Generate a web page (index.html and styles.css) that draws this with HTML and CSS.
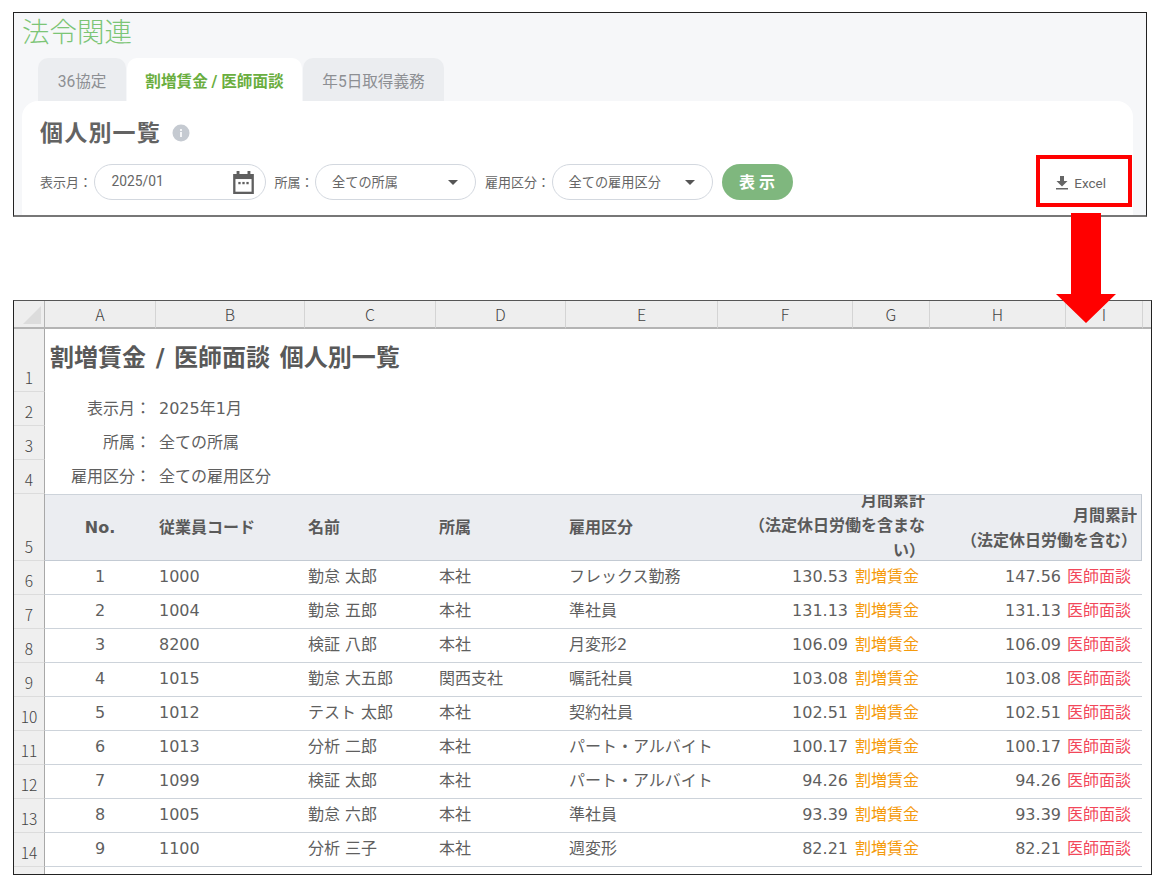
FILE: index.html
```html
<!DOCTYPE html>
<html lang="ja">
<head>
  <meta charset="UTF-8">
  <title>法令関連</title>
  <link rel="stylesheet" href="styles.css">
</head>
<body>
<div class="page">

  <div class="panel">
    <h1 class="app-title">法令関連</h1>
    <div class="tabs">
      <div class="tab">36協定</div>
      <div class="tab active">割増賃金 / 医師面談</div>
      <div class="tab">年5日取得義務</div>
    </div>
    <div class="card">
      <div class="card-head">
        <h2>個人別一覧</h2>
        <svg class="info" viewBox="0 0 18 18"><circle cx="9" cy="9" r="8.5" fill="#c5cad1"/><rect x="8" y="8" width="2" height="5" fill="#f4f5f7"/><rect x="8" y="5" width="2" height="2" fill="#f4f5f7"/></svg>
      </div>
      <div class="filters">
        <label>表示月：</label>
        <div class="field date">
          <span>2025/01</span>
          <svg class="cal" viewBox="2 1 18 20"><path d="M2 3.500h3V1h2.500v2.500h7V1H17v2.500h3V21H2z" fill="#5f5f5f"/><rect x="4" y="8" width="14" height="11" fill="#fff"/><rect x="6.500" y="10.500" width="2" height="2" fill="#5f5f5f"/><rect x="10" y="10.500" width="2" height="2" fill="#5f5f5f"/><rect x="13.500" y="10.500" width="2" height="2" fill="#5f5f5f"/></svg>
        </div>
        <label>所属：</label>
        <div class="field select">
          <span>全ての所属</span><i class="caret"></i>
        </div>
        <label>雇用区分：</label>
        <div class="field select">
          <span>全ての雇用区分</span><i class="caret"></i>
        </div>
        <button class="show-btn">表 示</button>
        <div class="excel-btn">
          <svg viewBox="0 0 12 14"><path d="M4 0h4v5h3.500L6 10.500.5 5H4z" fill="#666"/><rect x="0" y="12" width="12" height="1.500" fill="#666"/></svg>
          <span>Excel</span>
        </div>
      </div>
    </div>
  </div>

  <div class="sheet">
    <table class="grid">
      <colgroup>
        <col class="c-rh"><col class="c-a"><col class="c-b"><col class="c-c"><col class="c-d"><col class="c-e"><col class="c-f"><col class="c-g"><col class="c-h"><col class="c-i"><col class="c-end">
      </colgroup>
      <tr class="col-heads">
        <th class="corner"><i></i></th>
        <th>A</th><th>B</th><th>C</th><th>D</th><th>E</th><th>F</th><th>G</th><th>H</th><th>I</th><th></th>
      </tr>
      <tr class="r-title">
        <td class="rh">1</td>
        <td colspan="10" class="title">割増賃金 / 医師面談 個人別一覧</td>
      </tr>
      <tr class="r-info">
        <td class="rh">2</td>
        <td class="info-k">表示月：</td>
        <td colspan="9" class="info-v">2025年1月</td>
      </tr>
      <tr class="r-info">
        <td class="rh">3</td>
        <td class="info-k">所属：</td>
        <td colspan="9" class="info-v">全ての所属</td>
      </tr>
      <tr class="r-info">
        <td class="rh">4</td>
        <td class="info-k">雇用区分：</td>
        <td colspan="9" class="info-v">全ての雇用区分</td>
      </tr>
      <tr class="r-head">
        <td class="rh">5</td>
        <th class="ctr">No.</th>
        <th>従業員コード</th>
        <th>名前</th>
        <th>所属</th>
        <th>雇用区分</th>
        <th colspan="2" class="num"><div class="clip clip-3">月間累計<br>（法定休日労働を含まな<br>い）</div></th>
        <th colspan="2" class="num"><div class="clip">月間累計<br>（法定休日労働を含む）</div></th>
        <td class="blank"></td>
      </tr>
      <tr class="r-data"><td class="rh">6</td><td class="ctr">1</td><td>1000</td><td>勤怠 太郎</td><td>本社</td><td>フレックス勤務</td><td class="num">130.53</td><td class="wage">割増賃金</td><td class="num">147.56</td><td class="doc">医師面談</td><td class="blank"></td></tr>
      <tr class="r-data"><td class="rh">7</td><td class="ctr">2</td><td>1004</td><td>勤怠 五郎</td><td>本社</td><td>準社員</td><td class="num">131.13</td><td class="wage">割増賃金</td><td class="num">131.13</td><td class="doc">医師面談</td><td class="blank"></td></tr>
      <tr class="r-data"><td class="rh">8</td><td class="ctr">3</td><td>8200</td><td>検証 八郎</td><td>本社</td><td>月変形2</td><td class="num">106.09</td><td class="wage">割増賃金</td><td class="num">106.09</td><td class="doc">医師面談</td><td class="blank"></td></tr>
      <tr class="r-data"><td class="rh">9</td><td class="ctr">4</td><td>1015</td><td>勤怠 大五郎</td><td>関西支社</td><td>嘱託社員</td><td class="num">103.08</td><td class="wage">割増賃金</td><td class="num">103.08</td><td class="doc">医師面談</td><td class="blank"></td></tr>
      <tr class="r-data"><td class="rh">10</td><td class="ctr">5</td><td>1012</td><td>テスト 太郎</td><td>本社</td><td>契約社員</td><td class="num">102.51</td><td class="wage">割増賃金</td><td class="num">102.51</td><td class="doc">医師面談</td><td class="blank"></td></tr>
      <tr class="r-data"><td class="rh">11</td><td class="ctr">6</td><td>1013</td><td>分析 二郎</td><td>本社</td><td>パート・アルバイト</td><td class="num">100.17</td><td class="wage">割増賃金</td><td class="num">100.17</td><td class="doc">医師面談</td><td class="blank"></td></tr>
      <tr class="r-data"><td class="rh">12</td><td class="ctr">7</td><td>1099</td><td>検証 太郎</td><td>本社</td><td>パート・アルバイト</td><td class="num">94.26</td><td class="wage">割増賃金</td><td class="num">94.26</td><td class="doc">医師面談</td><td class="blank"></td></tr>
      <tr class="r-data"><td class="rh">13</td><td class="ctr">8</td><td>1005</td><td>勤怠 六郎</td><td>本社</td><td>準社員</td><td class="num">93.39</td><td class="wage">割増賃金</td><td class="num">93.39</td><td class="doc">医師面談</td><td class="blank"></td></tr>
      <tr class="r-data"><td class="rh">14</td><td class="ctr">9</td><td>1100</td><td>分析 三子</td><td>本社</td><td>週変形</td><td class="num">82.21</td><td class="wage">割増賃金</td><td class="num">82.21</td><td class="doc">医師面談</td><td class="blank"></td></tr>
    </table>
    <div class="sheet-rest"><i></i></div>
  </div>

  <!-- annotations over the screenshots -->
  <div class="mark-box"></div>
  <svg class="mark-arrow" viewBox="0 0 60 112"><path d="M15 0h30v81h15L30 110 0 81h15z" fill="#ff0000"/></svg>
</div>
</body>
</html>
```

FILE: styles.css
```css
html,
body {
  margin: 0;
  padding: 0;
  background: #fff;
}

.page {
  position: relative;
  width: 1169px;
  height: 887px;
  overflow: hidden;
  padding-top: 12px;
  box-sizing: border-box;
  font-family: Roboto, "Noto Sans CJK JP", sans-serif;
}

/* upper screenshot */
.panel {
  margin-left: 13px;
  width: 1134px;
  height: 205px;
  box-sizing: border-box;
  border: 1px solid #222;
  border-bottom: 2px solid #777;
  background: #f6f7f9;
  overflow: hidden;
  padding-left: 8px;
}

.app-title {
  margin: 0;
  height: 45px;
  font-size: 27.500px;
  line-height: 40px;
  font-weight: 300;
  color: #7cc576;
}

.tabs {
  display: flex;
  gap: 1px;
  margin-left: 16px;
  height: 43px;
}

.tab {
  display: flex;
  align-items: center;
  justify-content: center;
  padding: 0 18px;
  background: #ebedf0;
  border-radius: 10px 10px 0 0;
  font-size: 15.600px;
  font-weight: 400;
  color: #8d8f93;
}

.tab:first-child {
  width: 88px;
  padding: 0;
}

.tab.active {
  width: 175px;
  padding: 0;
  background: #fff;
  color: #6aae3f;
  font-weight: 700;
}

.tab:last-child {
  width: 141px;
  padding: 0;
}

.card {
  width: 1111px;
  height: 130px;
  box-sizing: border-box;
  background: #fff;
  border-radius: 16px 16px 0 0;
  padding: 0 18px;
}

.card-head {
  display: flex;
  align-items: center;
  gap: 11px;
  height: 63px;
}

.card-head h2 {
  margin: -4px 0 0;
  font-size: 23px;
  letter-spacing: 1.200px;
  font-weight: 700;
  color: #636363;
}

.info {
  width: 18px;
  height: 18px;
}

.filters {
  display: flex;
  align-items: center;
  height: 36px;
}

.filters label {
  font-size: 13px;
  color: #666;
  margin: -2px 1.500px 0 0;
  white-space: nowrap;
}

.field {
  display: flex;
  align-items: center;
  justify-content: space-between;
  height: 36px;
  box-sizing: border-box;
  border: 1px solid #d3d8df;
  border-radius: 18px;
  padding: 0 11px 0 17px;
  font-size: 13.200px;
  color: #666;
  margin-right: 9px;
}

.field span {
  margin-top: -2px;
}

.field.date {
  width: 172px;
  font-size: 13.800px;
}

.field.select {
  width: 161px;
  padding: 0 17px 0 16px;
}

.cal {
  width: 21px;
  height: 23px;
}

.caret {
  width: 0;
  height: 0;
  border-left: 5px solid transparent;
  border-right: 5px solid transparent;
  border-top: 5px solid #555;
}

.show-btn {
  width: 71px;
  height: 36px;
  border: 0;
  border-radius: 18px;
  background: #7fb77e;
  color: #fff;
  font-family: inherit;
  font-size: 16px;
  font-weight: 700;
  padding: 0 0 3px;
}

.excel-btn {
  display: flex;
  align-items: center;
  gap: 6px;
  margin-left: auto;
  margin-right: 9px;
  font-size: 13.500px;
  color: #666;
  padding-top: 1px;
}

.excel-btn svg {
  width: 12px;
  height: 14px;
}

/* lower screenshot, excel sheet */
.sheet {
  margin: 83px 0 0 13px;
  width: 1139px;
  height: 575px;
  box-sizing: border-box;
  border: 1px solid #222;
  border-top-color: #555;
  overflow: hidden;
  background: #fff;
}

.grid {
  border-collapse: separate;
  border-spacing: 0;
  table-layout: fixed;
  width: 1137px;
  font-family: "DejaVu Sans", "Noto Sans CJK JP", sans-serif;
  font-size: 16px;
  line-height: 22px;
  color: #5f5f5f;
}

.c-rh { width: 31px; }
.c-a { width: 110px; }
.c-b { width: 149px; }
.c-c { width: 131px; }
.c-d { width: 130px; }
.c-e { width: 152px; }
.c-f { width: 135px; }
.c-g { width: 77px; }
.c-h { width: 136px; }
.c-i { width: 77px; }
.c-end { width: 9px; }

.grid td,
.grid th {
  padding: 0 4px;
  box-sizing: border-box;
  white-space: nowrap;
  overflow: hidden;
}

.col-heads th {
  height: 28px;
  background: #eeeeee;
  border-left: 1px solid #d4d4d4;
  border-bottom: 2px solid #b4b4b4;
  font-family: "Noto Sans CJK JP", sans-serif;
  font-weight: 300;
  font-size: 16px;
  color: #444;
  text-align: center;
}

.col-heads th:nth-child(2) {
  border-left: 0;
}

.col-heads .corner {
  position: relative;
  border-left: 0;
  border-right: 1px solid #b4b4b4;
}

.corner i {
  position: absolute;
  right: 3px;
  bottom: 3px;
  width: 0;
  height: 0;
  border-left: 18px solid transparent;
  border-bottom: 18px solid #dcdcdc;
}

.grid .rh {
  padding: 0 0 3px 0;
  background: #efefef;
  border-right: 1px solid #a8a8a8;
  border-bottom: 1px solid #dcdcdc;
  font-family: "Noto Sans CJK JP", sans-serif;
  font-weight: 300;
  font-size: 15.500px;
  color: #444;
  text-align: center;
  vertical-align: bottom;
}

.r-title td { height: 63px; }
.r-info td { height: 34px; }
.r-head td, .r-head th { height: 67px; }
.r-data td { height: 34px; padding-bottom: 2px; }

.grid .title {
  padding: 0 0 5px 5px;
  font-size: 24px;
  font-weight: 700;
  line-height: 30px;
  word-spacing: 1.300px;
  color: #595959;
}

.grid .info-k {
  text-align: right;
  padding-right: 4px;
}

.grid .info-v {
  padding-left: 4px;
}

.r-head th {
  background: #ebedf1;
  border-top: 1px solid #cdd3da;
  border-bottom: 1px solid #c3cad3;
  font-weight: 700;
  text-align: left;
  color: #5a5a5a;
}

.grid .r-head .num {
  text-align: right;
  padding-right: 4px;
}

.grid .r-head th:last-of-type {
  border-right: 1px solid #c3cad3;
}

.clip {
  display: flex;
  flex-direction: column;
  justify-content: center;
  height: 65px;
  line-height: 25px;
  overflow: hidden;
}

.clip-3 {
  box-sizing: border-box;
  padding-bottom: 4px;
}

.r-data td {
  border-bottom: 1px solid #cdd3da;
}

.grid .r-data .blank,
.grid .r-head .blank {
  border: 0;
  background: #fff;
}

.grid .ctr {
  text-align: center;
}

.grid .r-data .num {
  text-align: right;
}

.grid .wage,
.grid .doc {
  padding-left: 3px;
  padding-right: 0;
}

.grid .wage {
  color: #f59a0c;
}

.grid .doc {
  padding-left: 2px;
  color: #f2485a;
}

.sheet-rest {
  height: 10px;
  width: 31px;
  box-sizing: border-box;
  background: #efefef;
  border-right: 1px solid #a8a8a8;
}

/* red annotations */
.mark-box {
  position: absolute;
  left: 1036px;
  top: 155px;
  width: 96px;
  height: 52px;
  box-sizing: border-box;
  border: 4px solid #ff0000;
}

.mark-arrow {
  position: absolute;
  left: 1056px;
  top: 213px;
  width: 60px;
  height: 112px;
}
```
